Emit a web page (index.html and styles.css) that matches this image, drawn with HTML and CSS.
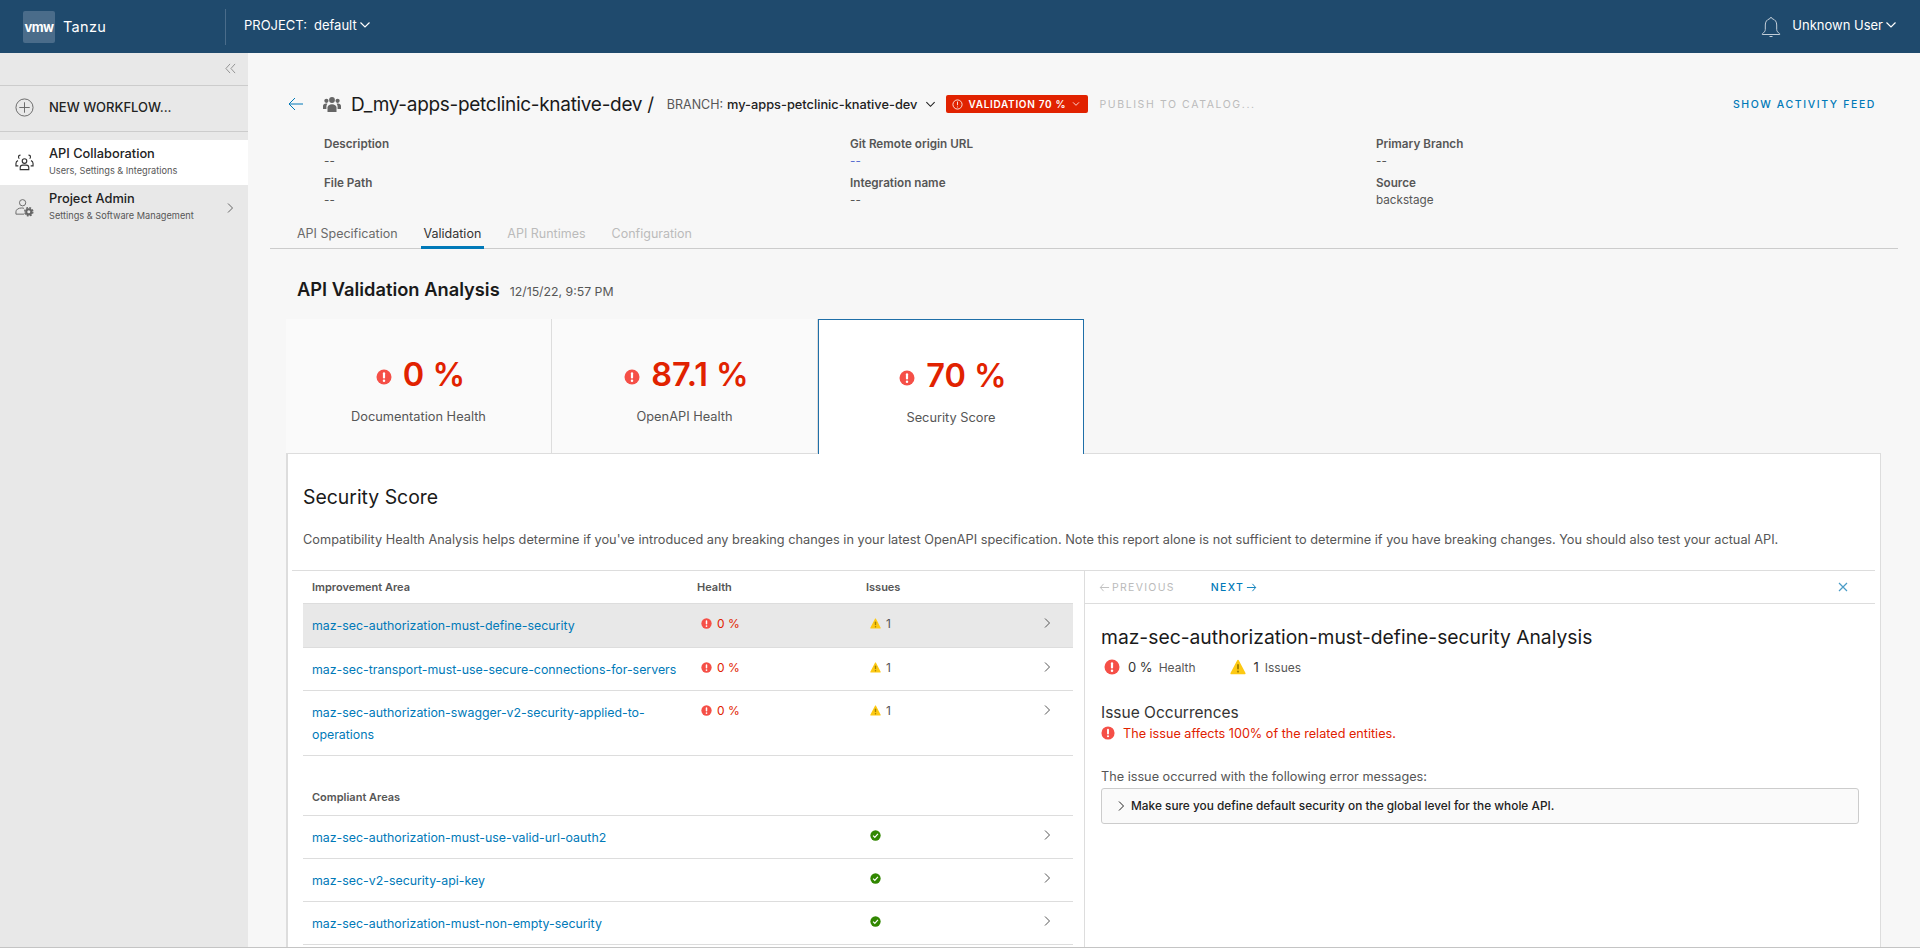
FILE: index.html
```html
<!DOCTYPE html>
<html lang="en">
<head>
  <meta charset="UTF-8" />
  <title>API Validation Analysis</title>
  <link rel="stylesheet" href="styles.css">
</head>
<body>

<svg class="sprite" aria-hidden="true">
  <symbol id="i-error" viewBox="0 0 16 16">
    <circle cx="8" cy="8" r="7.5" fill="#f54f47"/>
    <rect x="6.9" y="3.2" width="2.2" height="6.4" rx="1.1" fill="#fff"/>
    <circle cx="8" cy="11.7" r="1.25" fill="#fff"/>
  </symbol>
  <symbol id="i-warn" viewBox="0 0 16 16">
    <path d="M8 .8c.4 0 .7.2.9.6l6.6 12.6c.3.6-.1 1.3-.8 1.3H1.300c-.7 0-1.100-.7-.8-1.300L7.100 1.400c.2-.4.5-.6.9-.6z" fill="#fdc913"/>
    <rect x="7" y="5" width="2" height="5.600" rx="1" fill="#a68300"/>
    <circle cx="8" cy="12.600" r="1.100" fill="#a68300"/>
  </symbol>
  <symbol id="i-ok" viewBox="0 0 16 16">
    <circle cx="8" cy="8" r="7.500" fill="#318700"/>
    <path d="M4.500 8.200l2.500 2.500 4.500-5" fill="none" stroke="#fff" stroke-width="1.800"/>
  </symbol>
  <symbol id="i-right" viewBox="0 0 12 12">
    <path d="M4 1.500L8.500 6 4 10.500" fill="none" stroke="currentColor" stroke-width="1"/>
  </symbol>
  <symbol id="i-down" viewBox="0 0 12 12">
    <path d="M1.500 3.500L6 8l4.500-4.500" fill="none" stroke="currentColor" stroke-width="1.200"/>
  </symbol>
</svg>

<div class="app">
  <header class="topbar">
    <div class="brand">
      <span class="vmw">vmw</span>
      <span class="brand-name">Tanzu</span>
    </div>
    <div class="project">
      <span>PROJECT:</span>
      <span class="project-name">default</span>
      <svg class="chev-sm"><use href="#i-down"/></svg>
    </div>
    <div class="user">
      <svg class="bell" viewBox="0 0 20 22">
        <path d="M10 1.500c-.8 0-1.300.6-1.300 1.300C5.700 3.500 4.300 6 4.300 9v4.500c0 1.800-1.300 3-3 4.300v.7h17.400v-.7c-1.700-1.300-3-2.500-3-4.300V9c0-3-1.400-5.500-4.400-6.200 0-.7-.5-1.300-1.300-1.300z" fill="none" stroke="#c3ced8" stroke-width="1"/>
        <path d="M8.500 20.500h3" stroke="#c3ced8" stroke-width="1"/>
      </svg>
      <span class="user-name">Unknown User</span>
      <svg class="chev-sm"><use href="#i-down"/></svg>
    </div>
  </header>

  <div class="main">
    <aside class="sidebar">
      <div class="collapse">
        <svg viewBox="0 0 12 12" class="collapse-icon">
          <path d="M5.500 1L1 6l4.500 5M11 1L6.500 6l4.500 5" fill="none" stroke="#8c8c8c" stroke-width="1"/>
        </svg>
      </div>
      <div class="new-workflow">
        <svg class="side-icon" viewBox="0 0 20 20">
          <circle cx="10" cy="10" r="9" fill="none" stroke="#666" stroke-width="1"/>
          <path d="M10 4.500v11M4.500 10h11" stroke="#666" stroke-width="1"/>
        </svg>
        <span>NEW WORKFLOW...</span>
      </div>
      <div class="side-item active">
        <svg class="side-icon" viewBox="0 0 20 20" fill="none" stroke="#333" stroke-width="1.200">
          <circle cx="10" cy="8.500" r="2.400"/>
          <path d="M5.500 17.500v-2.300c0-1.400 1.200-2.500 2.600-2.500h3.800c1.400 0 2.600 1.100 2.600 2.500v2.300z"/>
          <path d="M5.800 2.200C4.500 2.200 3.700 3.200 3.700 4.200c0 .7.300 1.300.9 1.700M14.200 2.200c1.300 0 2.100 1 2.100 2 0 .7-.3 1.300-.9 1.700M3.200 8C1.800 8.400 1 9.500 1 11v2.500h2.500M16.800 8c1.400.4 2.200 1.500 2.200 3v2.500h-2.500"/>
        </svg>
        <div class="side-text">
          <div class="side-title">API Collaboration</div>
          <div class="side-sub">Users, Settings &amp; Integrations</div>
        </div>
      </div>
      <div class="side-item">
        <svg class="side-icon" viewBox="0 0 20 20" fill="none" stroke="#666" stroke-width="1">
          <circle cx="8" cy="5" r="3.300"/>
          <path d="M9.500 17H1v-2.500c0-2.300 2.500-4 6-4 1 0 1.800.1 2.500.4"/>
          <circle cx="14.500" cy="14.500" r="2.700" stroke="#666" stroke-width="2.200"/>
          <circle cx="14.500" cy="14.500" r="4.300" stroke="#666" stroke-width="1.400" stroke-dasharray="2 1.380"/>
        </svg>
        <div class="side-text">
          <div class="side-title">Project Admin</div>
          <div class="side-sub">Settings &amp; Software Management</div>
        </div>
        <svg class="side-chev"><use href="#i-right"/></svg>
      </div>
    </aside>

    <main class="content">
      <div class="page-head">
        <svg class="back" viewBox="0 0 15 14">
          <path d="M7 1L1 7l6 6M1 7h14" fill="none" stroke="#0079b8" stroke-width="1"/>
        </svg>
        <svg class="group-icon" viewBox="0 0 18 18" fill="#666">
          <circle cx="9" cy="5" r="2.900"/>
          <circle cx="3.400" cy="5.800" r="2.100"/>
          <circle cx="14.600" cy="5.800" r="2.100"/>
          <path d="M4.500 17v-4.500c0-2 2-3.300 4.500-3.300s4.500 1.300 4.500 3.300V17z"/>
          <path d="M0 14v-3c0-1.500 1.300-2.500 3-2.500.6 0 1 .1 1.400.3-.6.800-1 1.700-1 2.700v2.500zM18 14v-3c0-1.500-1.300-2.500-3-2.500-.6 0-1 .1-1.400.3.600.8 1 1.700 1 2.700v2.500z"/>
        </svg>
        <h1 class="page-title">D_my-apps-petclinic-knative-dev /</h1>
        <div class="branch">
          <span class="branch-label">BRANCH:</span>
          <span class="branch-name">my-apps-petclinic-knative-dev</span>
          <svg class="chev-branch"><use href="#i-down"/></svg>
        </div>
        <div class="badge">
          <svg class="badge-icon" viewBox="0 0 12 12" fill="none" stroke="#fff" stroke-width=".9">
            <circle cx="6" cy="6" r="5"/>
            <path d="M6 2.800v4M6 8.200v1"/>
          </svg>
          <span>VALIDATION 70 %</span>
          <svg class="badge-chev"><use href="#i-down"/></svg>
        </div>
        <span class="publish">PUBLISH TO CATALOG...</span>
        <a class="activity" href="#">SHOW ACTIVITY FEED</a>
      </div>

      <div class="meta">
        <div class="meta-item"><div class="meta-label">Description</div><div class="meta-value">--</div></div>
        <div class="meta-item"><div class="meta-label">Git Remote origin URL</div><div class="meta-value link">--</div></div>
        <div class="meta-item"><div class="meta-label">Primary Branch</div><div class="meta-value">--</div></div>
        <div class="meta-item"><div class="meta-label">File Path</div><div class="meta-value">--</div></div>
        <div class="meta-item"><div class="meta-label">Integration name</div><div class="meta-value">--</div></div>
        <div class="meta-item"><div class="meta-label">Source</div><div class="meta-value">backstage</div></div>
      </div>

      <nav class="tabs">
        <a class="tab" href="#">API Specification</a>
        <a class="tab active" href="#">Validation</a>
        <a class="tab disabled" href="#">API Runtimes</a>
        <a class="tab disabled" href="#">Configuration</a>
      </nav>

      <div class="analysis-head">
        <h2>API Validation Analysis</h2>
        <span class="analysis-date">12/15/22, 9:57 PM</span>
      </div>

      <div class="cards">
        <div class="card">
          <div class="score"><svg class="score-icon"><use href="#i-error"/></svg><span>0 %</span></div>
          <div class="card-label">Documentation Health</div>
        </div>
        <div class="card">
          <div class="score"><svg class="score-icon"><use href="#i-error"/></svg><span>87.1 %</span></div>
          <div class="card-label">OpenAPI Health</div>
        </div>
        <div class="card active">
          <div class="score"><svg class="score-icon"><use href="#i-error"/></svg><span>70 %</span></div>
          <div class="card-label">Security Score</div>
        </div>
      </div>

      <section class="panel">
        <h3 class="panel-title">Security Score</h3>
        <p class="panel-desc">Compatibility Health Analysis helps determine if you've introduced any breaking changes in your latest OpenAPI specification. Note this report alone is not sufficient to determine if you have breaking changes. You should also test your actual API.</p>

        <div class="split">
          <div class="rules">
            <div class="rule-head">
              <span>Improvement Area</span>
              <span>Health</span>
              <span>Issues</span>
            </div>
            <div class="rule selected">
              <a class="rule-name" href="#">maz-sec-authorization-must-define-security</a>
              <div class="cell health"><svg class="cell-icon"><use href="#i-error"/></svg>0 %</div>
              <div class="cell issues"><svg class="cell-icon"><use href="#i-warn"/></svg>1</div>
              <svg class="rule-chev"><use href="#i-right"/></svg>
            </div>
            <div class="rule">
              <a class="rule-name" href="#">maz-sec-transport-must-use-secure-connections-for-servers</a>
              <div class="cell health"><svg class="cell-icon"><use href="#i-error"/></svg>0 %</div>
              <div class="cell issues"><svg class="cell-icon"><use href="#i-warn"/></svg>1</div>
              <svg class="rule-chev"><use href="#i-right"/></svg>
            </div>
            <div class="rule">
              <a class="rule-name" href="#">maz-sec-authorization-swagger-v2-security-applied-to-<br>operations</a>
              <div class="cell health"><svg class="cell-icon"><use href="#i-error"/></svg>0 %</div>
              <div class="cell issues"><svg class="cell-icon"><use href="#i-warn"/></svg>1</div>
              <svg class="rule-chev"><use href="#i-right"/></svg>
            </div>
            <div class="compliant-head">Compliant Areas</div>
            <div class="rule">
              <a class="rule-name" href="#">maz-sec-authorization-must-use-valid-url-oauth2</a>
              <div class="cell"></div>
              <div class="cell issues"><svg class="cell-icon"><use href="#i-ok"/></svg></div>
              <svg class="rule-chev"><use href="#i-right"/></svg>
            </div>
            <div class="rule">
              <a class="rule-name" href="#">maz-sec-v2-security-api-key</a>
              <div class="cell"></div>
              <div class="cell issues"><svg class="cell-icon"><use href="#i-ok"/></svg></div>
              <svg class="rule-chev"><use href="#i-right"/></svg>
            </div>
            <div class="rule">
              <a class="rule-name" href="#">maz-sec-authorization-must-non-empty-security</a>
              <div class="cell"></div>
              <div class="cell issues"><svg class="cell-icon"><use href="#i-ok"/></svg></div>
              <svg class="rule-chev"><use href="#i-right"/></svg>
            </div>
          </div>

          <div class="detail">
            <div class="detail-nav">
              <span class="nav-btn off">
                <svg class="nav-arrow" viewBox="0 0 12 12"><path d="M5 2L1.500 6 5 10M1.500 6H11" fill="none" stroke="currentColor"/></svg>PREVIOUS
              </span>
              <span class="nav-btn">NEXT
                <svg class="nav-arrow" viewBox="0 0 12 12"><path d="M7 2l3.500 4L7 10M10.500 6H1" fill="none" stroke="currentColor"/></svg>
              </span>
              <svg class="close" viewBox="0 0 10 10"><path d="M1 1l8 8M9 1L1 9" stroke="#4a9cc7" stroke-width="1.200"/></svg>
            </div>
            <div class="detail-body">
              <h3 class="detail-title">maz-sec-authorization-must-define-security Analysis</h3>
              <div class="stats">
                <span class="stat"><svg class="stat-icon"><use href="#i-error"/></svg><b>0 %</b> <span>Health</span></span>
                <span class="stat"><svg class="stat-icon"><use href="#i-warn"/></svg><b>1</b> <span>Issues</span></span>
              </div>
              <h4 class="occ-title">Issue Occurrences</h4>
              <div class="occ-alert"><svg class="alert-icon"><use href="#i-error"/></svg>The issue affects 100% of the related entities.</div>
              <p class="occ-text">The issue occurred with the following error messages:</p>
              <div class="occ-box">
                <svg class="occ-chev"><use href="#i-right"/></svg>
                <span>Make sure you define default security on the global level for the whole API.</span>
              </div>
            </div>
          </div>
        </div>
      </section>
    </main>
  </div>
</div>

</body>
</html>
```
FILE: styles.css
```css
* {
  box-sizing: border-box;
}
html, body {
  margin: 0;
  height: 100%;
  overflow: hidden;
}
body {
  font-family: Inter, "Noto Sans", sans-serif;
  font-size: 13px;
  color: #565656;
  background: #f7f7f7;
}
a {
  text-decoration: none;
}
h1, h2, h3, h4, p {
  margin: 0;
  font-weight: 400;
}
.sprite {
  display: none;
}
.app {
  height: 948px;
  display: flex;
  flex-direction: column;
  border-bottom: 1px solid #c4c4c4;
}

/* top bar */
.topbar {
  height: 53px;
  flex: none;
  display: flex;
  align-items: center;
  background: #1f4a6d;
  color: #fff;
}
.brand {
  width: 226px;
  height: 36px;
  padding-left: 23px;
  display: flex;
  align-items: center;
  gap: 8px;
  border-right: 1px solid #4a6c8a;
}
.vmw {
  width: 32px;
  height: 32px;
  background: #4a6c8a;
  border-radius: 2px;
  display: flex;
  align-items: center;
  justify-content: center;
  font-size: 13px;
  font-weight: 700;
  letter-spacing: -0.6px;
}
.brand-name {
  font-size: 14.5px;
  letter-spacing: 0.3px;
}
.project {
  margin-left: 18px;
  display: flex;
  align-items: center;
  font-size: 13px;
  margin-top: -3px;
}
.project-name {
  margin-left: 7px;
}
.chev-sm {
  width: 12px;
  height: 12px;
  margin-left: 2px;
}
.user {
  margin-left: auto;
  padding-right: 23px;
  display: flex;
  align-items: center;
  font-size: 13px;
  margin-top: -3px;
}
.bell {
  width: 20px;
  height: 22px;
  margin-right: 11px;
  margin-top: 4px;
}

/* sidebar */
.main {
  flex: 1;
  min-height: 0;
  display: flex;
}
.sidebar {
  width: 248px;
  flex: none;
  background: #e8e8e8;
  color: #333;
}
.collapse {
  height: 33px;
  padding: 0 12px 0 0;
  display: flex;
  align-items: center;
  justify-content: flex-end;
  border-bottom: 1px solid #ccc;
}
.collapse-icon {
  width: 11px;
  height: 11px;
  margin-top: -1px;
}
.new-workflow {
  height: 46px;
  padding: 0 0 3px 15px;
  display: flex;
  align-items: center;
  gap: 15px;
  border-bottom: 1px solid #ccc;
  margin-bottom: 8px;
  font-size: 13px;
  font-weight: 500;
  color: #222;
}
.side-icon {
  width: 19px;
  height: 19px;
  flex: none;
}
.side-item {
  height: 45px;
  padding-left: 15px;
  display: flex;
  align-items: center;
  gap: 15px;
}
.side-item.active {
  background: #fff;
}
.side-text {
  padding-bottom: 2px;
}
.side-title {
  font-size: 12.8px;
  font-weight: 500;
  line-height: 16px;
  color: #222;
}
.side-sub {
  font-size: 9.2px;
  line-height: 14px;
  margin-top: 2px;
  color: #565656;
}
.side-chev {
  width: 12px;
  height: 12px;
  margin-left: auto;
  margin-right: 12px;
  color: #666;
}

/* content header */
.content {
  flex: 1;
  min-width: 0;
  display: flex;
  flex-direction: column;
}
.page-head {
  height: 36px;
  margin-top: 33px;
  padding: 0 44px 0 40px;
  display: flex;
  align-items: center;
  flex: none;
}
.back {
  width: 15px;
  height: 14px;
  margin-right: 20px;
}
.group-icon {
  width: 18px;
  height: 18px;
  margin-right: 10px;
}
.page-title {
  font-size: 19px;
  color: #1a1a1a;
  letter-spacing: -0.3px;
  white-space: nowrap;
}
.branch {
  margin-left: 13px;
  display: flex;
  align-items: center;
  font-size: 12.5px;
  white-space: nowrap;
}
.branch-name {
  margin-left: 4px;
  font-size: 12.8px;
  font-weight: 500;
  color: #222;
}
.chev-branch {
  width: 11px;
  height: 11px;
  margin-left: 8px;
  color: #222;
}
.badge {
  margin-left: 10px;
  width: 142px;
  height: 18px;
  padding-left: 6px;
  display: flex;
  align-items: center;
  background: #e12200;
  border-radius: 2px;
  color: #fff;
  font-size: 10px;
  font-weight: 600;
  letter-spacing: 0.7px;
  white-space: nowrap;
}
.badge-icon {
  width: 11px;
  height: 11px;
  margin-right: 5px;
}
.badge-chev {
  width: 8px;
  height: 8px;
  margin-left: auto;
  margin-right: 8px;
}
.publish {
  margin-left: 11px;
  font-size: 10.5px;
  letter-spacing: 1.6px;
  color: #bbb;
  white-space: nowrap;
}
.activity {
  margin-left: auto;
  font-size: 10.5px;
  font-weight: 500;
  letter-spacing: 1.6px;
  color: #0079b8;
  white-space: nowrap;
}

/* meta */
.meta {
  flex: none;
  margin: 13px 0 0 76px;
  display: grid;
  grid-template-columns: 526px 526px 1fr;
  row-gap: 4px;
  font-size: 11.7px;
}
.meta-label {
  line-height: 18px;
  font-weight: 600;
}
.meta-value {
  line-height: 17px;
}
.meta-value.link {
  color: #5a6fd0;
}

/* tabs */
.tabs {
  flex: none;
  height: 32px;
  margin: 8px 22px 0;
  padding-left: 24px;
  display: flex;
  gap: 20px;
  border-bottom: 1px solid #ccc;
}
.tab {
  height: 32px;
  padding: 0 3px;
  line-height: 34px;
  font-size: 12.5px;
  color: #6a6a6a;
  border-bottom: 3px solid transparent;
}
.tab.active {
  color: #333;
  border-bottom-color: #0079b8;
}
.tab.disabled {
  color: #bbb;
}

.analysis-head {
  flex: none;
  height: 70px;
  padding: 25px 0 0 49px;
  display: flex;
  align-items: baseline;
  gap: 10px;
}
.analysis-head h2 {
  font-size: 18.3px;
  font-weight: 600;
  color: #1a1a1a;
  line-height: 30px;
}
.analysis-date {
  font-size: 12.3px;
}

/* score cards */
.cards {
  flex: none;
  height: 134px;
  margin-left: 38px;
  display: flex;
  position: relative;
  z-index: 1;
}
.card {
  width: 266px;
  height: 134px;
  padding-top: 36px;
  background: #fafafa;
  border-right: 1px solid #ddd;
  display: flex;
  flex-direction: column;
  align-items: center;
}
.card.active {
  height: 135px;
  padding-top: 36px;
  background: #fff;
  border: 1px solid #1f6fa8;
  border-bottom: 0;
}
.score {
  display: flex;
  align-items: center;
  gap: 11px;
  padding-left: 4px;
  font-size: 32.5px;
  line-height: 40px;
  font-weight: 600;
  color: #e12200;
}
.score-icon {
  width: 16px;
  height: 16px;
  margin-top: 3px;
}
.card-label {
  margin-top: 14px;
  line-height: 16px;
  font-size: 12.8px;
}

/* panel */
.panel {
  flex: 1;
  min-height: 0;
  width: 1595px;
  margin-left: 38px;
  background: #fff;
  border-top: 1px solid #ddd;
  border-left: 2px solid #ddd;
  border-right: 1px solid #ddd;
  display: flex;
  flex-direction: column;
}
.panel-title {
  margin: 28px 0 0 15px;
  font-size: 19.4px;
  line-height: 30px;
  color: #1a1a1a;
}
.panel-desc {
  margin: 18px 0 0 15px;
  line-height: 20px;
  font-size: 12.75px;
  white-space: nowrap;
}
.split {
  flex: 1;
  min-height: 0;
  width: 1583px;
  margin: 20px 0 0 4px;
  border-top: 1px solid #ddd;
  display: flex;
}
.rules {
  width: 792px;
  flex: none;
  padding: 0 11px;
}
.rule-head {
  height: 33px;
  padding-left: 9px;
  display: grid;
  grid-template-columns: 385px 169px 1fr;
  align-items: center;
  font-size: 11px;
  font-weight: 600;
  border-bottom: 1px solid #ddd;
}
.rule {
  padding: 11px 20px 9px 9px;
  display: grid;
  grid-template-columns: 385px 169px 1fr 12px;
  border-bottom: 1px solid #ddd;
}
.rule.selected {
  padding-bottom: 10px;
  background: #e8e8e8;
}
.rule-name {
  line-height: 22px;
  font-size: 12.36px;
  color: #0079b8;
  white-space: nowrap;
}
.cell {
  display: flex;
  align-items: center;
  height: 16px;
  font-size: 12px;
}
.cell-icon {
  width: 11px;
  height: 11px;
  margin-right: 5px;
  flex: none;
}
.health {
  padding-left: 4px;
  color: #e12200;
}
.issues {
  padding-left: 4px;
}
.rule-chev {
  width: 12px;
  height: 12px;
  margin-top: 2px;
  color: #555;
}
.compliant-head {
  height: 60px;
  padding: 0 0 10px 9px;
  display: flex;
  align-items: flex-end;
  line-height: 16px;
  font-size: 11px;
  font-weight: 600;
  border-bottom: 1px solid #ddd;
}

/* detail pane */
.detail {
  flex: 1;
  min-width: 0;
  border-left: 1px solid #ddd;
}
.detail-nav {
  height: 33px;
  padding: 0 27px 0 14px;
  display: flex;
  align-items: center;
  gap: 36px;
  border-bottom: 1px solid #ddd;
}
.nav-btn {
  display: flex;
  align-items: center;
  gap: 2px;
  font-size: 10.5px;
  font-weight: 500;
  letter-spacing: 1.3px;
  color: #0079b8;
}
.nav-btn.off {
  color: #bbb;
  font-weight: 400;
}
.nav-arrow {
  width: 11px;
  height: 11px;
}
.close {
  width: 10px;
  height: 10px;
  margin-left: auto;
}
.detail-body {
  padding: 19px 0 0 16px;
}
.detail-title {
  font-size: 19.3px;
  line-height: 28px;
  color: #1a1a1a;
  white-space: nowrap;
}
.stats {
  margin-top: 6px;
  height: 20px;
  padding-left: 3px;
  display: flex;
  align-items: center;
  gap: 34px;
}
.stat {
  display: flex;
  align-items: center;
  gap: 4px;
  font-size: 12px;
}
.stat b {
  font-weight: 400;
  font-size: 13px;
  color: #333;
  margin-right: 2px;
}
.stat-icon {
  width: 16px;
  height: 16px;
  margin-right: 4px;
}
.occ-title {
  margin-top: 25px;
  font-size: 15.5px;
  line-height: 22px;
  color: #333;
}
.occ-alert {
  margin-top: 1px;
  line-height: 18px;
  display: flex;
  align-items: center;
  font-size: 12.65px;
  color: #e12200;
}
.alert-icon {
  width: 14px;
  height: 14px;
  margin-right: 8px;
  margin-top: -2px;
}
.occ-text {
  margin-top: 25px;
  line-height: 18px;
  font-size: 12.7px;
}
.occ-box {
  margin-top: 2px;
  width: 758px;
  height: 36px;
  padding-left: 13px;
  display: flex;
  align-items: center;
  gap: 4px;
  background: #fafafa;
  border: 1px solid #ccc;
  border-radius: 3px;
  font-size: 11.85px;
  font-weight: 500;
  color: #222;
}
.occ-chev {
  width: 12px;
  height: 12px;
  color: #222;
}
```
